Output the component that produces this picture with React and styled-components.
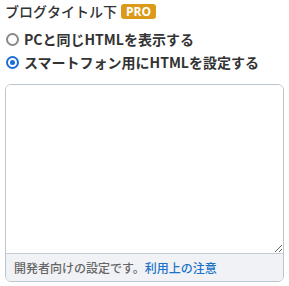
import React from 'react';
import styled, { createGlobalStyle } from 'styled-components';

const Global = createGlobalStyle`
  body {
    margin: 0;
    background: #fff;
    font-family: "Noto Sans CJK JP", "Noto Sans", sans-serif;
    color: #333;
  }
`;

export default function App() {
  return (
    <Panel>
      <Global />
      <Heading>
        ブログタイトル下
        <Badge>PRO</Badge>
      </Heading>
      <Options>
        <Option>
          <Radio />
          PCと同じHTMLを表示する
        </Option>
        <Option>
          <Radio checked />
          スマートフォン用にHTMLを設定する
        </Option>
      </Options>
      <Editor>
        <Area />
        <Note>
          開発者向けの設定です。<a href="#notice">利用上の注意</a>
        </Note>
      </Editor>
    </Panel>
  );
}

const Panel = styled.div`
  padding: 1px 5px 0 5px;
  width: 289px;
  box-sizing: border-box;
`;

const Heading = styled.div`
  display: flex;
  align-items: center;
  gap: 4px;
  font-size: 14px;
  font-weight: 500;
  line-height: 20px;
  color: #333;
`;

const Badge = styled.span`
  background: #db9a1b;
  color: #fff;
  font-family: "Open Sans", sans-serif;
  font-weight: 700;
  font-size: 12px;
  line-height: 15px;
  padding: 0 5px;
  border-radius: 3px;
`;

const Options = styled.div`
  display: flex;
  flex-direction: column;
  gap: 3px;
  margin-top: 8px;
`;

const Option = styled.label`
  display: flex;
  align-items: center;
  gap: 5px;
  font-size: 14px;
  font-weight: 700;
  line-height: 20px;
  color: #333;
`;

const Radio = styled.span`
  width: 13px;
  height: 13px;
  margin-left: 1px;
  box-sizing: border-box;
  border-radius: 50%;
  border: 2px solid ${p => (p.checked ? '#1a6fd8' : '#888')};
  display: flex;
  align-items: center;
  justify-content: center;
  &::after {
    content: '';
    width: 5px;
    height: 5px;
    border-radius: 50%;
    background: ${p => (p.checked ? '#1a6fd8' : 'transparent')};
  }
`;

const Editor = styled.div`
  margin-top: 12px;
  border: 1px solid #bcc4ce;
  border-radius: 6px;
  overflow: hidden;
  display: flex;
  flex-direction: column;
`;

const Area = styled.textarea`
  height: 169px;
  border: none;
  outline: none;
  resize: vertical;
  display: block;
  padding: 6px;
  margin: 0;
  box-sizing: border-box;
  border-bottom: 1px solid #c6ccd4;
`;

const Note = styled.div`
  background: #f1f2f6;
  font-size: 12px;
  font-weight: 500;
  line-height: 27px;
  padding: 0 8px;
  color: #666;
  a {
    color: #1a73c8;
    text-decoration: none;
  }
`;
